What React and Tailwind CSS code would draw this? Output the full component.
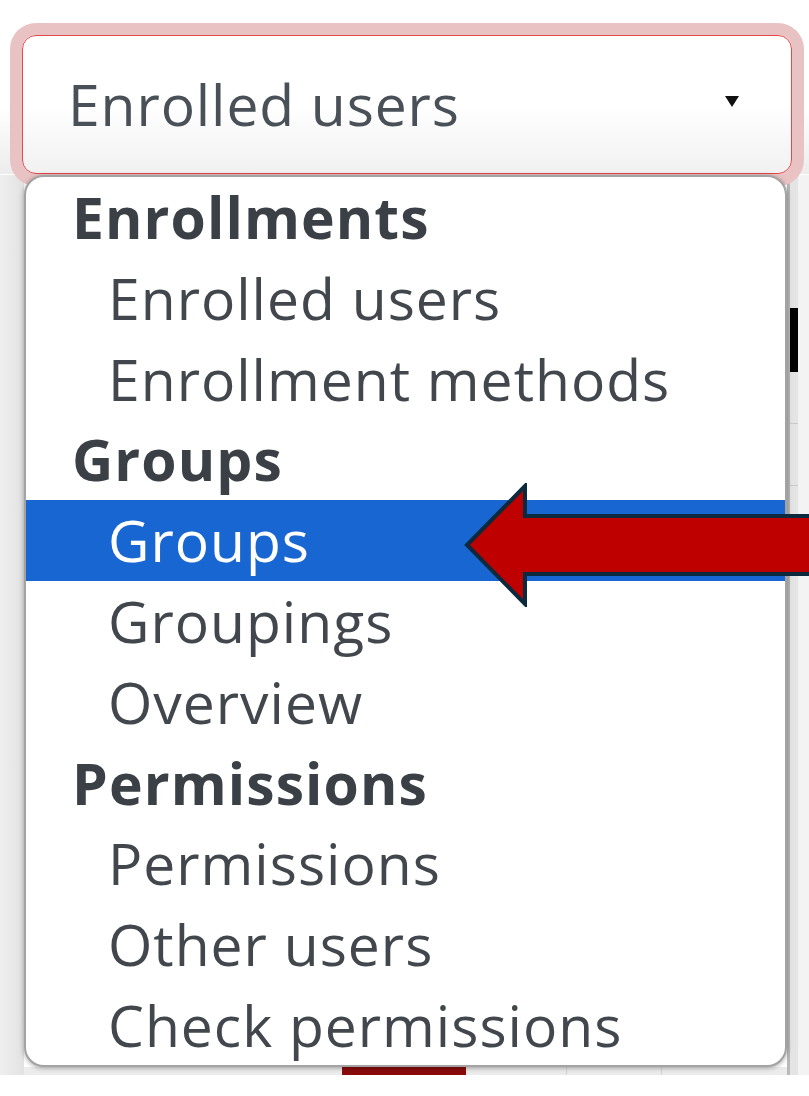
const groups = [
  {
    label: "Enrollments",
    items: ["Enrolled users", "Enrollment methods"],
  },
  {
    label: "Groups",
    items: ["Groups", "Groupings", "Overview"],
  },
  {
    label: "Permissions",
    items: ["Permissions", "Other users", "Check permissions"],
  },
];

const selected = "Groups";

const SelectBox = () => (
  <div className="relative z-[5] bg-linear-to-b from-white from-[62%] to-[#ececec] pt-[35px] pl-[22px]">
    <div className="flex w-[770px] h-[139px] items-start rounded-[14px] border-[1.5px] border-[#e5484a] bg-linear-to-b from-white via-white to-[#f1f1f1] pl-[45px] pr-[52px] shadow-[0_0_0_12px_#e9c3c4]">
      <span className="mt-[40px] text-[57px] leading-none tracking-[0.9px] text-[#495057]">
        Enrolled users
      </span>
      <svg className="ml-auto mt-[60px]" width="14" height="11" viewBox="0 0 14 11">
        <polygon points="0,0 14,0 7,11" fill="#111" />
      </svg>
    </div>
  </div>
);

const Menu = () => (
  <div className="relative z-10 h-[892px] w-[763px] overflow-hidden rounded-[20px] border-2 border-[#a3a3a3] bg-white shadow-[0_1px_5px_rgba(0,0,0,0.35)]">
    {groups.map((g) => (
      <div key={g.label}>
        <div className="pl-[46px] text-[57px] font-bold leading-[80.8px] tracking-[1.1px] text-[#3b4046]">
          {g.label}
        </div>
        {g.items.map((item, i) => {
          const active = g.label === "Groups" && item === selected && i === 0;
          return (
            <div
              key={item}
              className={
                active
                  ? "bg-[#1866d2] pl-[82px] text-[57px] leading-[80.8px] tracking-[1px] text-white"
                  : "pl-[82px] text-[57px] leading-[80.8px] tracking-[1px] text-[#42474d]"
              }
            >
              {item}
            </div>
          );
        })}
      </div>
    ))}
  </div>
);

// red pointer drawn over the open menu
const Arrow = () => (
  <svg
    className="absolute left-[463px] top-[483px] z-20"
    width="350"
    height="124"
    viewBox="0 0 350 124"
  >
    <polygon
      points="4,62 62,3 62,33 356,33 356,91 62,91 62,121"
      fill="#bf0000"
      stroke="#0b2a3d"
      strokeWidth="4"
      strokeLinejoin="miter"
    />
  </svg>
);

export default function App() {
  return (
    <div
      className="relative h-[1096px] w-[809px] overflow-hidden bg-white"
      style={{ fontFamily: '"Open Sans", "Liberation Sans", sans-serif' }}
    >
      <SelectBox />

      <div className="mt-[1px] flex">
        <div className="w-[24px] bg-linear-to-r from-[#efefef] to-[#e2e2e2]" />
        <div className="flex flex-col">
          <Menu />
          <div className="flex h-[8px] bg-[#ececec]">
            <div className="ml-[318px] w-[124px] bg-[#8b0b0b]" />
            <div className="ml-[100px] w-px bg-[#d4d4d4]" />
            <div className="ml-[94px] w-px bg-[#d4d4d4]" />
          </div>
        </div>
        <div className="flex w-[22px] bg-[#ededed]">
          <div className="w-[3px] bg-[#b9b9b9]" />
          <div className="flex w-[8px] flex-col bg-[#e4e4e4]">
            <div className="mt-[133px] h-[64px] bg-black" />
            <div className="mt-[51px] h-px bg-[#c9c9c9]" />
            <div className="mt-[61px] h-px bg-[#c9c9c9]" />
          </div>
          <div className="flex-1 bg-[#f3f3f3]" />
        </div>
      </div>

      <Arrow />
    </div>
  );
}
